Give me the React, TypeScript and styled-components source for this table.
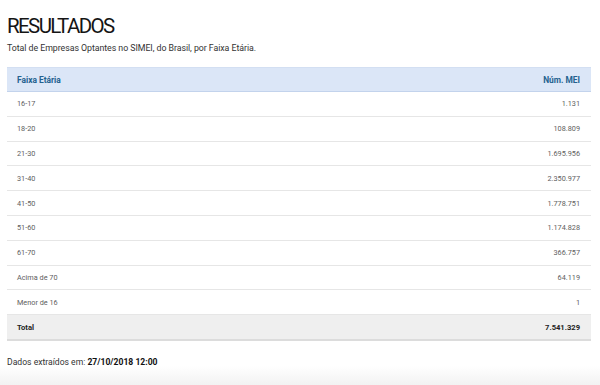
import styled, { createGlobalStyle } from "styled-components";

const GlobalStyle = createGlobalStyle`
  html, body {
    margin: 0;
    padding: 0;
    background: #ffffff;
  }
  body {
    font-family: Roboto, "Liberation Sans", Arial, sans-serif;
    color: #333333;
  }
`;

const Page = styled.div`
  width: 600px;
  height: 385px;
  box-sizing: border-box;
  padding: 16px 9px 0 7px;
  background: linear-gradient(to bottom, #ffffff 0, #ffffff 366px, #f2f2f2 385px);
  overflow: hidden;
`;

const Title = styled.h1`
  margin: 0;
  font-size: 20.5px;
  line-height: 20px;
  font-weight: 400;
  color: #151515;
  letter-spacing: -1.6px;
`;

const Subtitle = styled.p`
  margin: 6px 0 0;
  font-size: 8.8px;
  line-height: 12px;
  color: #333333;
  letter-spacing: -0.05px;
`;

const Table = styled.table`
  margin-top: 13px;
  width: 584px;
  border-collapse: collapse;
`;

const HeadCell = styled.th<{ $right?: boolean }>`
  height: 23px;
  padding: 0 11px 0 10px;
  background: #dbe6f7;
  border-top: 1px solid #d3dff2;
  border-bottom: 1px solid #c3d3ec;
  color: #24628f;
  font-size: 8.4px;
  font-weight: 700;
  text-align: ${(p) => (p.$right ? "right" : "left")};
`;

const Cell = styled.td<{ $right?: boolean; $total?: boolean }>`
  height: 23.8px;
  padding: 0 11px 0 10px;
  border-bottom: ${(p) => (p.$total ? "2px solid #dcdcdc" : "1px solid #e6e6e6")};
  background: ${(p) => (p.$total ? "#efefef" : "#ffffff")};
  color: ${(p) => (p.$total ? "#222222" : "#606060")};
  font-size: ${(p) => (p.$total ? "7.6px" : "7.3px")};
  font-weight: ${(p) => (p.$total ? 700 : 400)};
  text-align: ${(p) => (p.$right ? "right" : "left")};
`;

const Footer = styled.p`
  margin: 15px 0 0;
  font-size: 8.6px;
  line-height: 12px;
  color: #333333;

  strong {
    color: #111111;
    font-weight: 700;
  }
`;

const rows: [string, string][] = [
  ["16-17", "1.131"],
  ["18-20", "108.809"],
  ["21-30", "1.695.956"],
  ["31-40", "2.350.977"],
  ["41-50", "1.778.751"],
  ["51-60", "1.174.828"],
  ["61-70", "366.757"],
  ["Acima de 70", "64.119"],
  ["Menor de 16", "1"],
];

export default function App() {
  return (
    <>
      <GlobalStyle />
      <Page>
        <Title>RESULTADOS</Title>
        <Subtitle>Total de Empresas Optantes no SIMEI, do Brasil, por Faixa Etária.</Subtitle>
        <Table>
          <thead>
            <tr>
              <HeadCell>Faixa Etária</HeadCell>
              <HeadCell $right>Núm. MEI</HeadCell>
            </tr>
          </thead>
          <tbody>
            {rows.map(([faixa, num]) => (
              <tr key={faixa}>
                <Cell>{faixa}</Cell>
                <Cell $right>{num}</Cell>
              </tr>
            ))}
            <tr>
              <Cell $total>Total</Cell>
              <Cell $total $right>7.541.329</Cell>
            </tr>
          </tbody>
        </Table>
        <Footer>
          Dados extraídos em: <strong>27/10/2018 12:00</strong>
        </Footer>
      </Page>
    </>
  );
}
